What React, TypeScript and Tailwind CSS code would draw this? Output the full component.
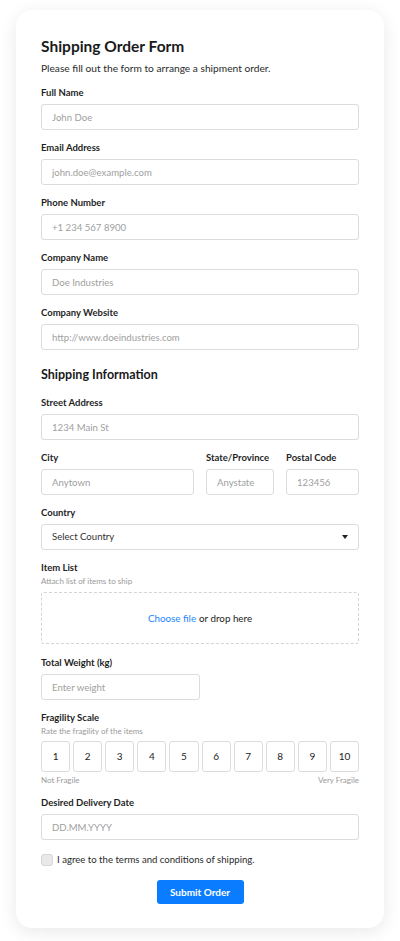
import React from 'react';

const font = { fontFamily: 'Lato, "Noto Sans", sans-serif' };

const Label: React.FC<{ children: React.ReactNode }> = ({ children }) => (
  <label className="block text-[9.5px] leading-[12px] font-bold text-[#1f1f1f]">{children}</label>
);

const Hint: React.FC<{ children: React.ReactNode }> = ({ children }) => (
  <p className="text-[8px] leading-[10px] text-[#9a9a9a] mt-[2px]">{children}</p>
);

const inputBase =
  'block h-[26px] rounded-[3px] border border-[#dcdcdc] bg-white px-[10px] text-[9.6px] text-[#333] placeholder:text-[#a0a0a0] outline-none';
const inputCls = `${inputBase} w-full`;

const Field: React.FC<{ label: string; placeholder: string; className?: string }> = ({
  label,
  placeholder,
  className,
}) => (
  <div className={className}>
    <Label>{label}</Label>
    <input className={`${inputCls} mt-[5px]`} placeholder={placeholder} />
  </div>
);

export default function App() {
  const scale = [1, 2, 3, 4, 5, 6, 7, 8, 9, 10];

  return (
    <div className="min-h-screen bg-white px-4 pt-[10px] pb-[13px]" style={font}>
      <div className="rounded-2xl bg-white px-[25px] pt-[26px] pb-[24px] shadow-[0_4px_18px_rgba(0,0,0,0.09)]">
        {/* Header */}
        <h1 className="text-[15.5px] leading-[20px] font-bold text-[#1a1a1a]">Shipping Order Form</h1>
        <p className="mt-[5px] text-[10.2px] leading-[14px] text-[#2a2a2a]">
          Please fill out the form to arrange a shipment order.
        </p>

        {/* Contact */}
        <div className="mt-[12px] flex flex-col gap-[12px]">
          <Field label="Full Name" placeholder="John Doe" />
          <Field label="Email Address" placeholder="john.doe@example.com" />
          <Field label="Phone Number" placeholder="+1 234 567 8900" />
          <Field label="Company Name" placeholder="Doe Industries" />
          <Field label="Company Website" placeholder="http://www.doeindustries.com" />
        </div>

        {/* Shipping */}
        <h2 className="mt-[16px] text-[12.5px] leading-[18px] font-bold text-[#1a1a1a]">Shipping Information</h2>

        <div className="mt-[13px] flex flex-col gap-[12px]">
          <Field label="Street Address" placeholder="1234 Main St" />

          <div className="flex gap-[12px]">
            <Field label="City" placeholder="Anytown" className="flex-1" />
            <Field label="State/Province" placeholder="Anystate" className="w-[68px]" />
            <Field label="Postal Code" placeholder="123456" className="w-[73px]" />
          </div>

          <div>
            <Label>Country</Label>
            <div className="relative mt-[5px]">
              <select className={`${inputCls} appearance-none text-[#222]`} defaultValue="">
                <option value="">Select Country</option>
                <option>United States</option>
                <option>Canada</option>
              </select>
              <span className="pointer-events-none absolute right-[11px] top-[11px] h-0 w-0 border-x-[3.5px] border-t-[4px] border-x-transparent border-t-[#222]" />
            </div>
          </div>

          <div>
            <Label>Item List</Label>
            <Hint>Attach list of items to ship</Hint>
            <div className="mt-[6px] flex h-[52px] items-center justify-center rounded-[3px] border border-dashed border-[#d4d4d4] text-[9.8px]">
              <span className="text-[#1a85ff]">Choose file</span>
              <span className="ml-[3px] text-[#222]">or drop here</span>
            </div>
          </div>

          <div className="mt-[1px]">
            <Label>Total Weight (kg)</Label>
            <input className={`${inputBase} mt-[5px] w-[159px]`} placeholder="Enter weight" />
          </div>

          <div>
            <Label>Fragility Scale</Label>
            <Hint>Rate the fragility of the items</Hint>
            <div className="mt-[5px] grid grid-cols-10 gap-[3px]">
              {scale.map((n) => (
                <button
                  key={n}
                  type="button"
                  className="h-[31px] rounded-[3px] border border-[#dcdcdc] bg-white text-[10px] text-[#222]"
                >
                  {n}
                </button>
              ))}
            </div>
            <div className="mt-[3px] flex justify-between text-[8px] leading-[10px] text-[#9a9a9a]">
              <span>Not Fragile</span>
              <span>Very Fragile</span>
            </div>
          </div>

          <Field label="Desired Delivery Date" placeholder="DD.MM.YYYY" />
        </div>

        {/* Terms */}
        <label className="mt-[14px] flex items-center gap-[4px]">
          <span className="h-[12px] w-[12px] rounded-[3px] border border-[#d6d6d6] bg-[#e9e9e9]" />
          <span className="text-[9.6px] leading-[12px] text-[#2a2a2a]">
            I agree to the terms and conditions of shipping.
          </span>
        </label>

        <div className="mt-[14px] flex justify-center">
          <button
            type="button"
            className="h-[24px] w-[87px] rounded-[3px] bg-[#0a7cff] text-[10px] font-bold text-white"
          >
            Submit Order
          </button>
        </div>
      </div>
    </div>
  );
}
